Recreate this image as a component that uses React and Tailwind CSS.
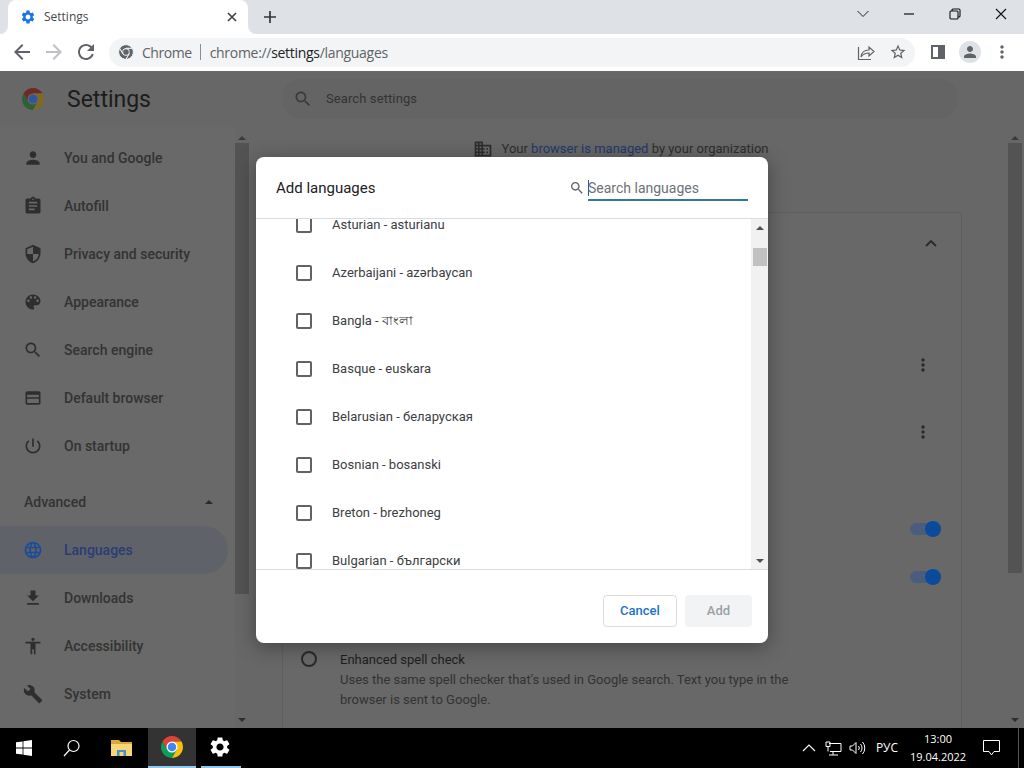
import React from "react";

const P = {
  person: "M12 12c2.21 0 4-1.79 4-4s-1.79-4-4-4-4 1.79-4 4 1.79 4 4 4zm0 2c-2.67 0-8 1.34-8 4v2h16v-2c0-2.66-5.33-4-8-4z",
  assignment: "M19 3h-4.18C14.4 1.84 13.3 1 12 1c-1.3 0-2.4.84-2.82 2H5c-1.1 0-2 .9-2 2v14c0 1.1.9 2 2 2h14c1.1 0 2-.9 2-2V5c0-1.1-.9-2-2-2zm-7 0c.55 0 1 .45 1 1s-.45 1-1 1-1-.45-1-1 .45-1 1-1zm2 14H7v-2h7v2zm3-4H7v-2h10v2zm0-4H7V7h10v2z",
  security: "M12 1L3 5v6c0 5.55 3.84 10.74 9 12 5.16-1.26 9-6.45 9-12V5l-9-4zm0 10.99h7c-.53 4.12-3.28 7.79-7 8.94V12H5V6.3l7-3.11v8.8z",
  palette: "M12 3c-4.97 0-9 4.03-9 9s4.03 9 9 9c.83 0 1.5-.67 1.5-1.5 0-.39-.15-.74-.39-1.01-.23-.26-.38-.61-.38-.99 0-.83.67-1.5 1.5-1.5H16c2.76 0 5-2.24 5-5 0-4.42-4.03-8-9-8zm-5.5 9c-.83 0-1.5-.67-1.5-1.5S5.67 9 6.5 9 8 9.67 8 10.5 7.33 12 6.5 12zm3-4C8.67 8 8 7.33 8 6.5S8.67 5 9.5 5s1.5.67 1.5 1.5S10.33 8 9.5 8zm5 0c-.83 0-1.5-.67-1.5-1.5S13.67 5 14.5 5s1.5.67 1.5 1.5S15.33 8 14.5 8zm3 4c-.83 0-1.5-.67-1.5-1.5S16.67 9 17.5 9s1.5.67 1.5 1.5-.67 1.5-1.5 1.5z",
  search: "M15.5 14h-.79l-.28-.27C15.41 12.59 16 11.11 16 9.5 16 5.91 13.09 3 9.5 3S3 5.91 3 9.5 5.91 16 9.5 16c1.61 0 3.09-.59 4.23-1.57l.27.28v.79l5 4.99L20.49 19l-4.99-5zm-6 0C7.01 14 5 11.99 5 9.5S7.01 5 9.5 5 14 7.01 14 9.5 11.99 14 9.5 14z",
  web: "M19 4H5c-1.11 0-2 .9-2 2v12c0 1.1.89 2 2 2h14c1.1 0 2-.9 2-2V6c0-1.1-.89-2-2-2zm0 14H5v-5h14v5zm0-7H5V8h14v3z",
  power: "M13 3h-2v10h2V3zm4.83 2.17l-1.42 1.42C17.99 7.86 19 9.81 19 12c0 3.87-3.13 7-7 7s-7-3.13-7-7c0-2.19 1.01-4.14 2.58-5.42L6.17 5.17C4.23 6.82 3 9.26 3 12c0 4.97 4.03 9 9 9s9-4.03 9-9c0-2.74-1.23-5.18-3.17-6.83z",
  language: "M11.99 2C6.47 2 2 6.48 2 12s4.47 10 9.99 10C17.52 22 22 17.52 22 12S17.52 2 11.99 2zm6.93 6h-2.95c-.32-1.25-.78-2.45-1.38-3.56 1.84.63 3.37 1.91 4.33 3.56zM12 4.04c.83 1.2 1.48 2.53 1.91 3.96h-3.82c.43-1.43 1.08-2.76 1.91-3.96zM4.26 14C4.1 13.36 4 12.69 4 12s.1-1.36.26-2h3.38c-.08.66-.14 1.32-.14 2 0 .68.06 1.34.14 2H4.26zm.82 2h2.95c.32 1.25.78 2.45 1.38 3.56-1.84-.63-3.37-1.9-4.33-3.56zm2.95-8H5.08c.96-1.66 2.49-2.93 4.33-3.56C8.81 5.55 8.35 6.75 8.03 8zM12 19.96c-.83-1.2-1.48-2.53-1.91-3.96h3.82c-.43 1.43-1.08 2.76-1.91 3.96zM14.34 14H9.66c-.09-.66-.16-1.32-.16-2 0-.68.07-1.35.16-2h4.68c.09.65.16 1.32.16 2 0 .68-.07 1.34-.16 2zm.25 5.56c.6-1.11 1.06-2.31 1.38-3.56h2.95c-.96 1.65-2.49 2.93-4.33 3.56zM16.36 14c.08-.66.14-1.32.14-2 0-.68-.06-1.34-.14-2h3.38c.16.64.26 1.31.26 2s-.1 1.36-.26 2h-3.38z",
  download: "M19 9h-4V3H9v6H5l7 7 7-7zM5 18v2h14v-2H5z",
  access: "M12 2c1.1 0 2 .9 2 2s-.9 2-2 2-2-.9-2-2 .9-2 2-2zm9 7h-6v13h-2v-6h-2v6H9V9H3V7h18v2z",
  build: "M22.7 19l-9.1-9.1c.9-2.3.4-5-1.5-6.9-2-2-5-2.4-7.4-1.3L9 6 6 9 1.6 4.7C.4 7.1.9 10.1 2.9 12.1c1.9 1.9 4.6 2.4 6.9 1.5l9.1 9.1c.4.4 1 .4 1.4 0l2.3-2.3c.5-.4.5-1.1.1-1.4z",
  business: "M12 7V3H2v18h20V7H12zM6 19H4v-2h2v2zm0-4H4v-2h2v2zm0-4H4V9h2v2zm0-4H4V5h2v2zm4 12H8v-2h2v2zm0-4H8v-2h2v2zm0-4H8V9h2v2zm0-4H8V5h2v2zm10 12h-8v-2h2v-2h-2v-2h2v-2h-2V9h8v10zm-2-8h-2v2h2v-2zm0 4h-2v2h2v-2z",
  gear: "M19.14 12.94c.04-.3.06-.61.06-.94 0-.32-.02-.64-.07-.94l2.03-1.58c.18-.14.23-.41.12-.61l-1.92-3.32c-.12-.22-.37-.29-.59-.22l-2.39.96c-.5-.38-1.03-.7-1.62-.94l-.36-2.54c-.04-.24-.24-.41-.48-.41h-3.84c-.24 0-.43.17-.47.41l-.36 2.54c-.59.24-1.13.57-1.62.94l-2.39-.96c-.22-.08-.47 0-.59.22L2.74 8.87c-.12.21-.08.47.12.61l2.03 1.58c-.05.3-.09.63-.09.94s.02.64.07.94l-2.03 1.58c-.18.14-.23.41-.12.61l1.92 3.32c.12.22.37.29.59.22l2.39-.96c.5.38 1.03.7 1.62.94l.36 2.54c.05.24.24.41.48.41h3.84c.24 0 .44-.17.47-.41l.36-2.54c.59-.24 1.13-.56 1.62-.94l2.39.96c.22.08.47 0 .59-.22l1.92-3.32c.12-.22.07-.47-.12-.61l-2.01-1.58zM12 15.6c-1.98 0-3.6-1.62-3.6-3.6s1.62-3.6 3.6-3.6 3.6 1.62 3.6 3.6-1.62 3.6-3.6 3.6z",
  back: "M20 11H7.83l5.59-5.59L12 4l-8 8 8 8 1.41-1.41L7.83 13H20v-2z",
  fwd: "M12 4l-1.41 1.41L16.17 11H4v2h12.17l-5.58 5.59L12 20l8-8z",
  reload: "M17.65 6.35C16.2 4.9 14.21 4 12 4c-4.42 0-7.99 3.58-7.99 8s3.57 8 7.99 8c3.73 0 6.84-2.55 7.73-6h-2.08c-.82 2.33-3.04 4-5.65 4-3.31 0-6-2.69-6-6s2.69-6 6-6c1.66 0 3.14.69 4.22 1.78L13 11h7V4l-2.35 2.35z",
  star: "M22 9.24l-7.19-.62L12 2 9.19 8.63 2 9.24l5.46 4.73L5.82 21 12 17.27 18.18 21l-1.63-7.03L22 9.24zM12 15.4l-3.76 2.27 1-4.28-3.32-2.88 4.38-.38L12 6.1l1.71 4.04 4.38.38-3.32 2.88 1 4.28L12 15.4z",
  dots: "M12 8c1.1 0 2-.9 2-2s-.9-2-2-2-2 .9-2 2 .9 2 2 2zm0 2c-1.1 0-2 .9-2 2s.9 2 2 2 2-.9 2-2-.9-2-2-2zm0 6c-1.1 0-2 .9-2 2s.9 2 2 2 2-.9 2-2-.9-2-2-2z",
};

function Ic({ d, size = 20, color = "#2e2e2e" }) {
  return (
    <svg width={size} height={size} viewBox="0 0 24 24" fill={color} className="shrink-0 block">
      <path d={d} />
    </svg>
  );
}

function ChromeLogo({ size, red, yellow, green, ring, blue, seam }) {
  const s = seam ? { stroke: seam, strokeWidth: 3 } : {};
  return (
    <svg width={size} height={size} viewBox="0 0 48 48" className="shrink-0 block">
      <path fill={red} {...s} d="M4.95 13A22 22 0 0 1 43.05 13L24 13L14.47 29.5Z" />
      <path fill={green} {...s} d="M4.95 13A22 22 0 0 0 24 46L33.53 29.5L14.47 29.5Z" />
      <path fill={yellow} {...s} d="M43.05 13A22 22 0 0 1 24 46L33.53 29.5L24 13Z" />
      <circle cx="24" cy="24" r="11" fill={ring} />
      <circle cx="24" cy="24" r="8.5" fill={blue} />
    </svg>
  );
}

function Scroll({ thumbH }) {
  return (
    <div className="w-[14px] shrink-0 flex flex-col items-center h-full relative">
      <div className="h-[16px] w-full flex items-end justify-center pb-[3px]">
        <div className="w-0 h-0 border-x-[4px] border-x-transparent border-b-[4px] border-b-[#3a3a3a]" />
      </div>
      <div className="w-full bg-[#535353]" style={{ height: thumbH }} />
      <div className="flex-1" />
      <div className="h-[16px] w-full flex items-center justify-center">
        <div className="w-0 h-0 border-x-[4px] border-x-transparent border-t-[4px] border-t-[#2e2e2e]" />
      </div>
    </div>
  );
}

const items = [
  ["You and Google", P.person],
  ["Autofill", P.assignment],
  ["Privacy and security", P.security],
  ["Appearance", P.palette],
  ["Search engine", P.search],
  ["Default browser", P.web],
  ["On startup", P.power],
];
const items2 = [
  ["Downloads", P.download],
  ["Accessibility", P.access],
  ["System", P.build],
];

function NavItem({ label, d, active }) {
  return (
    <div className={"h-12 w-[228px] flex items-center pl-[23px] rounded-r-[24px] " + (active ? "bg-[#5f6369]" : "")}>
      <Ic d={d} size={20} color={active ? "#1c4b9a" : "#2e2e2e"} />
      <span className={"ml-[21px] text-[14px] font-medium " + (active ? "text-[#2a3c74]" : "text-[#333333]")}>{label}</span>
    </div>
  );
}

function Toggle() {
  return (
    <div className="relative w-[31px] h-[18px] flex items-center">
      <div className="w-[26px] h-[12px] rounded-full bg-[#4a5d7c]" />
      <div className="absolute right-0 top-[1px] w-[16px] h-[16px] rounded-full bg-[#0c4a9a]" />
    </div>
  );
}

const langs = [
  "Asturian - asturianu",
  "Azerbaijani - azərbaycan",
  "Bangla - বাংলা",
  "Basque - euskara",
  "Belarusian - беларуская",
  "Bosnian - bosanski",
  "Breton - brezhoneg",
  "Bulgarian - български",
];

function Dialog() {
  return (
    <div className="absolute left-[256px] top-[157px] w-[512px] h-[486px] bg-white rounded-lg overflow-hidden shadow-[0_4px_20px_rgba(0,0,0,0.35)] flex flex-col font-[Roboto,sans-serif]">
      <div className="h-[62px] shrink-0 flex items-center pl-5 pr-5 border-b border-[#dadce0]">
        <span className="text-[15px] text-[#202124] mt-[2px]">Add languages</span>
        <div className="ml-auto flex items-center">
          <Ic d={P.search} size={16} color="#5f6368" />
          <div className="ml-[3px] w-[160px] h-[25px] mt-[2px] border-b-2 border-[#33789f] flex items-center relative">
            <div className="w-px h-[16px] bg-[#1a5fb4] absolute left-0 top-[4px]" />
            <span className="text-[14px] text-[#6e7276] mt-[2px]">Search languages</span>
          </div>
        </div>
      </div>
      <div className="h-[351px] shrink-0 flex border-b border-[#dadce0] overflow-hidden">
        <div className="flex-1 overflow-hidden">
          <div className="-mt-[18px]">
            {langs.map((l) => (
              <div key={l} className="h-12 flex items-center pl-10">
                <div className="w-4 h-4 border-2 border-[#5f6368] rounded-[2px] shrink-0" />
                <span className="ml-5 text-[13px] text-[#3c4043] font-[Roboto,'Noto_Sans','DejaVu_Sans',sans-serif]">{l}</span>
              </div>
            ))}
          </div>
        </div>
        <div className="w-[17px] bg-[#f1f1f1] flex flex-col items-center">
          <div className="h-[17px] w-full flex items-center justify-center">
            <div className="w-0 h-0 border-x-[4px] border-x-transparent border-b-[4px] border-b-[#505050]" />
          </div>
          <div className="mt-[12px] w-[14px] h-[18px] bg-[#c1c1c1]" />
          <div className="flex-1" />
          <div className="h-[17px] w-full flex items-center justify-center">
            <div className="w-0 h-0 border-x-[4px] border-x-transparent border-t-[4px] border-t-[#505050]" />
          </div>
        </div>
      </div>
      <div className="flex-1 flex items-start justify-end pt-[25px] pr-4 gap-2">
        <div className="w-[74px] h-8 rounded border border-[#dadce0] flex items-center justify-center text-[13px] font-medium text-[#1a73c8]">Cancel</div>
        <div className="w-[67px] h-8 rounded bg-[#f1f3f4] flex items-center justify-center text-[13px] font-medium text-[#9aa0a6]">Add</div>
      </div>
    </div>
  );
}

function TabStrip() {
  return (
    <div className="h-[34px] shrink-0 bg-[#dee1e6] flex items-end pl-2 font-['Open_Sans',sans-serif]">
      <div className="relative w-[240px] h-[34px] bg-white rounded-t-lg flex items-center pl-[12px] pr-[10px]">
        <div className="absolute -left-2 bottom-0 w-2 h-2 bg-white">
          <div className="w-2 h-2 bg-[#dee1e6] rounded-br-lg" />
        </div>
        <div className="absolute -right-2 bottom-0 w-2 h-2 bg-white">
          <div className="w-2 h-2 bg-[#dee1e6] rounded-bl-lg" />
        </div>
        <Ic d={P.gear} size={16} color="#1a73e8" />
        <span className="ml-[8px] text-[12px] text-[#45494d]">Settings</span>
        <svg width="10" height="10" viewBox="0 0 10 10" className="ml-auto mr-[1px]" stroke="#3c4043" strokeWidth="1.6" fill="none"><path d="M1 1l8 8M9 1l-8 8" /></svg>
      </div>
      <div className="h-[34px] w-[44px] flex items-center justify-center">
        <svg width="12" height="12" viewBox="0 0 12 12" stroke="#33363a" strokeWidth="1.7" fill="none"><path d="M6 0v12M0 6h12" /></svg>
      </div>
      <div className="flex-1" />
      <div className="h-[28px] self-start flex items-center">
        <div className="w-[46px] flex justify-center">
          <svg width="14" height="14" viewBox="0 0 14 14" stroke="#222" strokeWidth="1" fill="none"><path d="M1.5 4L7 9.5 12.5 4" /></svg>
        </div>
        <div className="w-[46px] flex justify-center">
          <svg width="12" height="12" viewBox="0 0 12 12" stroke="#111" strokeWidth="1.2" fill="none"><path d="M1 6h10" /></svg>
        </div>
        <div className="w-[46px] flex justify-center">
          <svg width="12" height="12" viewBox="0 0 12 12" stroke="#111" strokeWidth="1.1" fill="none"><rect x="1" y="3" width="8" height="8" rx="1" /><path d="M3 3V2a1 1 0 0 1 1-1h6a1 1 0 0 1 1 1v6a1 1 0 0 1-1 1H9" /></svg>
        </div>
        <div className="w-[46px] flex justify-center">
          <svg width="12" height="12" viewBox="0 0 12 12" stroke="#111" strokeWidth="1.1" fill="none"><path d="M1 1l10 10M11 1L1 11" /></svg>
        </div>
      </div>
    </div>
  );
}

function Toolbar() {
  return (
    <div className="h-[37px] pb-[1px] shrink-0 bg-white flex items-center font-['Open_Sans',sans-serif]">
      <div className="w-[109px] flex items-center pl-[10px] gap-2 shrink-0">
        <Ic d={P.back} size={24} color="#5f6368" />
        <Ic d={P.fwd} size={24} color="#bdc1c6" />
        <Ic d={P.reload} size={24} color="#5f6368" />
      </div>
      <div className="w-[806px] h-[29px] rounded-full bg-[#f2f4f5] flex items-center pl-[9px] pr-[8px] shrink-0">
        <ChromeLogo size={16} red="#5f6368" yellow="#5f6368" green="#5f6368" ring="#f2f4f5" blue="#5f6368" seam="#f2f4f5" />
        <span className="ml-[8px] text-[14px] tracking-[-0.45px] text-[#5f6368]">Chrome</span>
        <div className="ml-2 w-px h-4 bg-[#8a8d91]" />
        <span className="ml-[9px] text-[14px] tracking-[-0.3px] text-[#5f6368]">
          chrome://<span className="text-[#202124]">settings</span>/languages
        </span>
        <div className="ml-auto flex items-center gap-[14px]">
          <svg width="18" height="18" viewBox="0 0 18 18" fill="none" stroke="#5f6368" strokeWidth="1.2">
            <path d="M1.5 4v12.5H14M4 14c.5-4.5 3.5-7 8-7V4l5 4.5L12 13v-3c-3.5 0-6 1-8 4z" />
          </svg>
          <Ic d={P.star} size={18} color="#5f6368" />
        </div>
      </div>
      <div className="flex-1 flex items-center justify-end pr-[12px]">
        <div className="w-[14px] h-[14px] border-[2px] border-[#5f6368] flex justify-end mr-[14px]">
          <div className="w-[5px] h-full bg-[#5f6368]" />
        </div>
        <div className="w-[22px] h-[22px] rounded-full bg-[#dee1e6] flex items-center justify-center mr-[11px]">
          <Ic d={P.person} size={18} color="#5f6368" />
        </div>
        <Ic d={P.dots} size={20} color="#5f6368" />
      </div>
    </div>
  );
}

function Page() {
  return (
    <div className="flex-1 min-h-0 bg-[#666766] flex flex-col font-[Roboto,sans-serif] overflow-hidden">
      <div className="h-14 shrink-0 flex items-center">
        <div className="w-[282px] flex items-center pl-[21px] shrink-0">
          <ChromeLogo size={24} red="#6e2a24" yellow="#7f6a22" green="#2f5f38" ring="#666" blue="#2f55a0" />
          <span className="ml-[22px] mt-[2px] text-[23px] text-[#1c1c1c]">Settings</span>
        </div>
        <div className="w-[676px] h-10 rounded-full bg-[#636463] flex items-center pl-[11px] -mt-[1px]">
          <Ic d={P.search} size={20} color="#3a3a3a" />
          <span className="ml-[13px] text-[13px] tracking-[0.1px] text-[#333333]">Search settings</span>
        </div>
      </div>
      <div className="flex-1 min-h-0 flex">
        <div className="w-[235px] shrink-0 pt-[7px] bg-[#686968] overflow-hidden">
          {items.map(([l, d]) => <NavItem key={l} label={l} d={d} />)}
          <div className="mt-2 h-12 flex items-center justify-between pl-6 pr-[22px]">
            <span className="text-[14px] font-medium text-[#333333]">Advanced</span>
            <div className="w-0 h-0 border-x-[4px] border-x-transparent border-b-[4px] border-b-[#2a2a2a]" />
          </div>
          <NavItem label="Languages" d={P.language} active />
          {items2.map(([l, d]) => <NavItem key={l} label={l} d={d} />)}
        </div>
        <Scroll thumbH={451} />
        <div className="w-[759px] shrink-0 pl-[33px] overflow-hidden">
          <div className="w-[680px] h-[20px] mt-[12px] pr-[3px] flex items-center justify-center">
            <Ic d={P.business} size={20} color="#2e2e2e" />
            <span className="ml-[9px] text-[13px] text-[#2e2e2e]">
              Your <span className="text-[#24386e]">browser is managed</span> by your organization
            </span>
          </div>
          <div className="mt-[53px] w-[680px] h-[600px] bg-[#676867] border-t border-x border-[#5e5f5e] rounded-t">
            <div className="h-[60px] flex items-center justify-end pr-[23px]">
              <svg width="14" height="14" viewBox="0 0 14 14" fill="none" stroke="#2a2a2a" strokeWidth="1.8"><path d="M2 10l5-5 5 5" /></svg>
            </div>
            <div className="h-[60px]" />
            <div className="h-[64px] flex items-center justify-end pr-[28px]"><Ic d={P.dots} size={20} color="#2a2a2a" /></div>
            <div className="h-[70px] flex items-center justify-end pr-[28px]"><Ic d={P.dots} size={20} color="#2a2a2a" /></div>
            <div className="h-[38px]" />
            <div className="h-12 flex items-center justify-end pr-5"><Toggle /></div>
            <div className="h-12 flex items-center justify-end pr-5"><Toggle /></div>
            <div className="h-[49px]" />
            <div className="flex pl-[18px]">
              <div className="w-4 h-4 mt-[1px] rounded-full border-2 border-[#2a2a2a] shrink-0" />
              <div className="ml-[23px] text-[13px] leading-[20px] text-[#333333]">
                <div className="text-[#1e1e1e]">Enhanced spell check</div>
                <div>Uses the same spell checker that's used in Google search. Text you type in the</div>
                <div>browser is sent to Google.</div>
              </div>
            </div>
          </div>
        </div>
        <Scroll thumbH={430} />
      </div>
    </div>
  );
}

function Taskbar() {
  return (
    <div className="h-10 shrink-0 bg-black flex items-stretch text-white font-['Open_Sans',sans-serif]">
      <div className="w-12 flex items-center justify-center">
        <svg width="16" height="16" viewBox="0 0 16 16" fill="#fff"><path d="M0 2.3L6.6 1.4V7.6H0zM7.4 1.3L16 0V7.6H7.4zM0 8.4H6.6V14.6L0 13.7zM7.4 8.4H16V16L7.4 14.7z" /></svg>
      </div>
      <div className="w-12 flex items-center justify-center">
        <svg width="18" height="18" viewBox="0 0 18 18" fill="none" stroke="#fff" strokeWidth="1.2"><circle cx="10.5" cy="7" r="5.5" /><path d="M6.5 11L1 17" /></svg>
      </div>
      <div className="w-[52px] flex items-center justify-center">
        <svg width="22" height="18" viewBox="0 0 22 18">
          <path fill="#d9a83a" d="M0 1h8l2 2h11v3H0z" />
          <path fill="#f6d676" d="M0 5h21v12H0z" />
          <path fill="#4a90c8" d="M6 11h9v6H6z" />
          <path fill="#f6d676" d="M8.5 13h4v4h-4z" />
        </svg>
      </div>
      <div className="w-12 bg-[#333333] flex flex-col items-center">
        <div className="flex-1 flex items-center justify-center">
          <ChromeLogo size={24} red="#db4437" yellow="#f4c20d" green="#0f9d58" ring="#fff" blue="#4285f4" />
        </div>
        <div className="w-full h-[2px] bg-[#90c8ec]" />
      </div>
      <div className="w-12 flex flex-col items-center">
        <div className="flex-1 flex items-center justify-center">
          <Ic d={P.gear} size={24} color="#fff" />
        </div>
        <div className="ml-[2px] w-10 h-[2px] bg-[#90c8ec]" />
      </div>
      <div className="flex-1" />
      <div className="w-6 flex items-center justify-center">
        <svg width="14" height="8" viewBox="0 0 14 8" fill="none" stroke="#fff" strokeWidth="1.1"><path d="M1 7l6-6 6 6" /></svg>
      </div>
      <div className="w-6 flex items-center justify-center">
        <svg width="17" height="15" viewBox="0 0 17 15" fill="none" stroke="#fff" strokeWidth="1"><path d="M4 2.5h12v8H5M8 10.5V14M4 14h9M1 5.5V1h4v4.5zM3 5.5v5" /></svg>
      </div>
      <div className="w-6 flex items-center justify-center">
        <svg width="17" height="14" viewBox="0 0 17 14" fill="none" stroke="#fff" strokeWidth="1"><path d="M1 5v4h2.5L7 12.5v-11L3.5 5zM9.5 5a3 3 0 0 1 0 4M11.5 3a6 6 0 0 1 0 8M13.5 1a9 9 0 0 1 0 12" /></svg>
      </div>
      <div className="w-9 flex items-center justify-center text-[12px]">РУС</div>
      <div className="w-[66px] flex flex-col items-center justify-center text-[11px] leading-[18px]">
        <span>13:00</span>
        <span>19.04.2022</span>
      </div>
      <div className="w-10 flex items-center justify-center">
        <svg width="17" height="16" viewBox="0 0 17 16" fill="none" stroke="#fff" strokeWidth="1"><path d="M.5.5h16v11h-5.5L8.5 15 6 11.5H.5z" /></svg>
      </div>
      <div className="ml-[7px] mr-[5px] w-px bg-[#555555]" />
    </div>
  );
}

export default function App() {
  return (
    <div className="relative w-[1024px] h-[768px] overflow-hidden flex flex-col">
      <TabStrip />
      <Toolbar />
      <Page />
      <Taskbar />
      <Dialog />
    </div>
  );
}
